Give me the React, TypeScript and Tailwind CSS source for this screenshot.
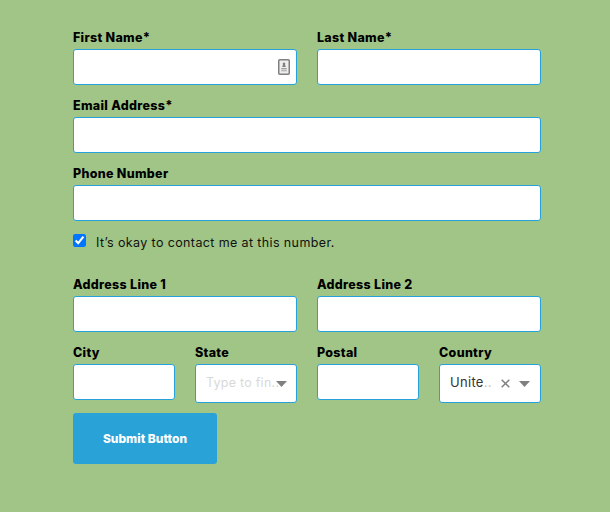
const font = { fontFamily: 'Inter, sans-serif' };

const Label = ({ text }: { text: string }) => (
    <label className="block h-[17px] mb-[3px] text-[12.5px] leading-[17px] font-extrabold tracking-[0.3px] text-black">{text}</label>
);

const Field = ({ label, children }: { label: string; children?: React.ReactNode }) => (
    <div className="min-w-0">
        <Label text={label} />
        <div className="relative h-9 bg-white border border-[#27a1d9] rounded-[3px]">{children}</div>
    </div>
);

const Arrow = () => (
    <svg width="11" height="6" viewBox="0 0 11 6" className="shrink-0">
        <path d="M0 0h11L5.5 6z" fill="#808080" />
    </svg>
);

const ContactIcon = () => (
    <svg width="12" height="16" viewBox="0 0 12 16" className="absolute right-[6px] top-[9px]">
        <rect x="0.75" y="0.75" width="10.5" height="14.5" rx="1" fill="#eeeeee" stroke="#808080" strokeWidth="1.5" />
        <path d="M6 3.5a1.2 1.2 0 0 1 1 2l.8 2.5H4.2L5 5.5a1.2 1.2 0 0 1 1-2z" fill="#808080" />
        <rect x="3.2" y="9" width="5.6" height="1.4" fill="#a0a0a0" />
        <rect x="3.2" y="11" width="5.6" height="1.4" fill="#b8b8b8" />
    </svg>
);

const Select = ({ label, children }: { label: string; children: React.ReactNode }) => (
    <div className="min-w-0">
        <Label text={label} />
        <div className="flex items-center h-[39px] bg-white border border-[#27a1d9] rounded-[3px]">{children}</div>
    </div>
);

export default function App() {
    return (
        <div className="w-full min-h-[512px] bg-[#a0c586] pt-[29px] pl-[73px] pr-[69px]" style={font}>
            <div className="flex flex-col">
                <div className="grid grid-cols-2 gap-x-5">
                    <Field label="First Name*"><ContactIcon /></Field>
                    <Field label="Last Name*" />
                </div>
                <div className="mt-3">
                    <Field label="Email Address*" />
                </div>
                <div className="mt-3">
                    <Field label="Phone Number" />
                </div>
                <div className="flex items-start mt-[13px] h-[15px]">
                    <input type="checkbox" defaultChecked className="w-[13px] h-[13px] m-0 accent-[#0075ff]" />
                    <span className="ml-[10px] text-[12.5px] leading-[17px] tracking-[0.38px] text-[#111]">It’s okay to contact me at this number.</span>
                </div>
                <div className="grid grid-cols-2 gap-x-5 mt-[27px]">
                    <Field label="Address Line 1" />
                    <Field label="Address Line 2" />
                </div>
                <div className="grid grid-cols-4 gap-x-5 mt-3 items-start">
                    <Field label="City" />
                    <Select label="State">
                        <span className="flex-1 min-w-0 pl-[10px] -mt-px text-[12.5px] tracking-[0.25px] text-[#d9d9d9] whitespace-nowrap">Type to fin..</span>
                        <span className="mr-[9px] flex"><Arrow /></span>
                    </Select>
                    <Field label="Postal" />
                    <Select label="Country">
                        <span className="flex-1 min-w-0 pl-[10px] -mt-px text-[13px] tracking-[0.3px] text-[#333] whitespace-nowrap">Unite<span className="text-[#c4c4c4]">..</span></span>
                        <svg width="9" height="9" viewBox="0 0 9 9" className="mr-[9px] shrink-0">
                            <path d="M.7.7l7.6 7.6M8.3.7L.7 8.3" stroke="#808080" strokeWidth="1.5" />
                        </svg>
                        <span className="mr-[10px] flex"><Arrow /></span>
                    </Select>
                </div>
                <button className="w-36 h-[51px] mt-[10px] bg-[#29a2d8] rounded-[3px] text-white text-[12px] font-extrabold">Submit Button</button>
            </div>
        </div>
    );
}
